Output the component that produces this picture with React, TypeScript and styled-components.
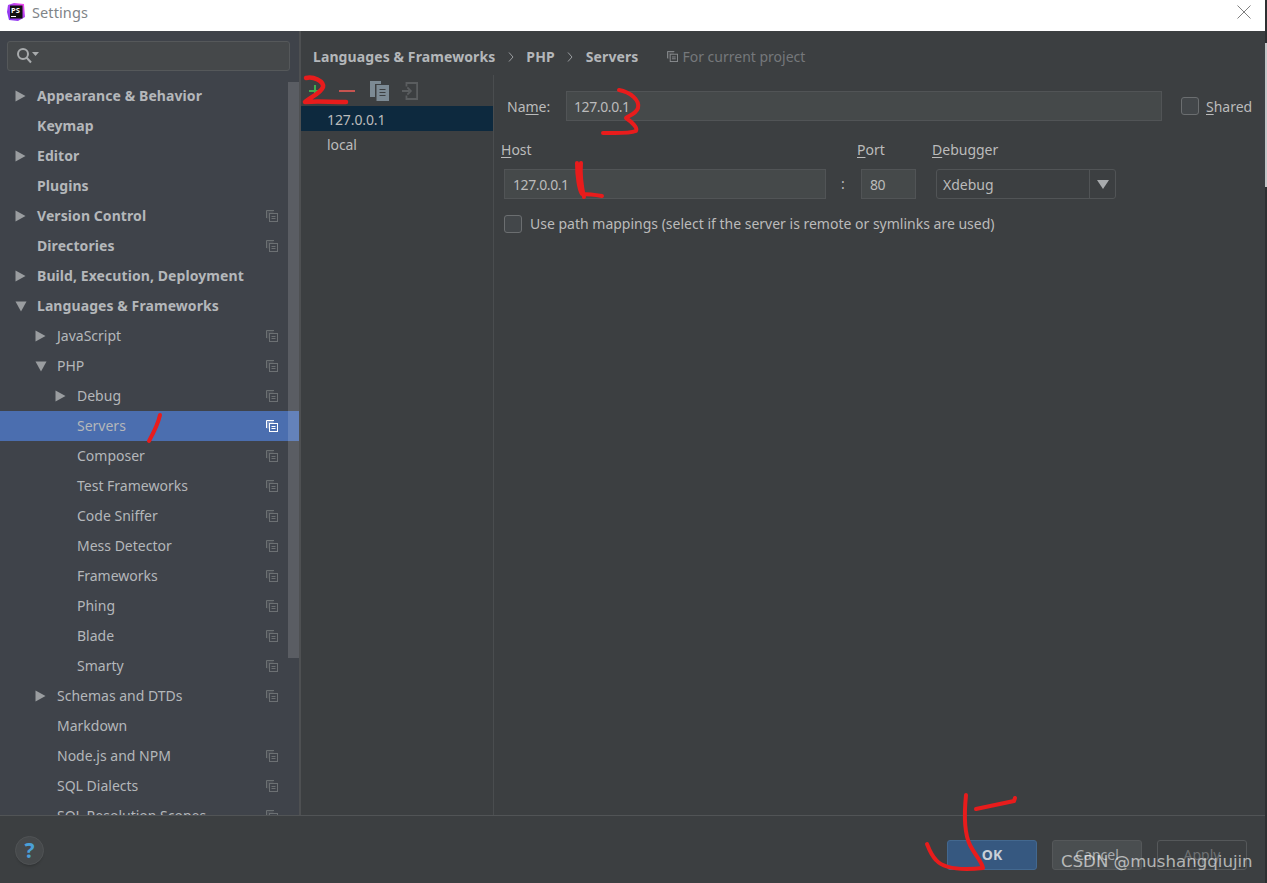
import React from "react";
import styled, { createGlobalStyle } from "styled-components";

const Global = createGlobalStyle`
  html, body { margin: 0; padding: 0; width: 100%; height: 100%; overflow: hidden; background: #3c3f41; }
  #root { height: 100%; }
  * { box-sizing: border-box; }
`;

const Frame = styled.div`
  position: relative;
  width: 1267px;
  height: 883px;
  display: flex;
  flex-direction: column;
  overflow: hidden;
  background: #3c3f41;
  color: #bbbbbb;
  font-family: "Noto Sans", "Open Sans", sans-serif;
  font-size: 14px;
`;

const TitleBar = styled.div`
  height: 31px;
  flex: none;
  background: #ffffff;
  display: flex;
  align-items: center;
  padding: 0 16px 7px 6px;
  gap: 6px;
  color: #7f8488;
  font-size: 14.5px;
`;
const TitleText = styled.span`
  flex: 1;
  letter-spacing: 0.1px;
`;

const Body = styled.div`
  flex: 1;
  min-height: 0;
  display: flex;
`;

const Sidebar = styled.div`
  position: relative;
  width: 299px;
  flex: none;
  background: #3f434a;
  padding: 10px 10px 0 7px;
  overflow: hidden;
`;
const Divider = styled.div`
  width: 2px;
  flex: none;
  background: #4e5052;
`;
const SearchBox = styled.div`
  height: 30px;
  width: 283px;
  border: 1px solid #55585a;
  border-radius: 3px;
  background: #45484a;
  display: flex;
  align-items: center;
  padding-left: 8px;
`;
const Tree = styled.div`
  margin: 10px -10px 0 -7px;
`;
const Row = styled.div<{ $active?: boolean; $indent: number }>`
  height: 30px;
  display: flex;
  align-items: center;
  padding-left: ${(p) => 15 + p.$indent * 20}px;
  padding-right: 21px;
  background: ${(p) => (p.$active ? "#4b6eaf" : "transparent")};
`;
const Arrow = styled.span`
  width: 22px;
  flex: none;
  display: flex;
`;
const RowLabel = styled.span<{ $bold?: boolean }>`
  flex: 1;
  white-space: nowrap;
  margin-bottom: 2px;
  font-weight: ${(p) => (p.$bold ? 700 : 400)};
  font-size: 14px;
  letter-spacing: ${(p) => (p.$bold ? "0.08px" : "0")};
  color: #b4b7ba;
`;
const ScrollThumb = styled.div`
  position: absolute;
  top: 51px;
  right: 0;
  width: 11px;
  height: 576px;
  background: rgba(255, 255, 255, 0.14);
`;

const Main = styled.div`
  flex: 1;
  min-width: 0;
  display: flex;
  flex-direction: column;
`;
const Crumbs = styled.div`
  height: 44px;
  flex: none;
  display: flex;
  align-items: flex-end;
  padding: 0 0 9px 12px;
  font-weight: 700;
  letter-spacing: 0.1px;
  white-space: nowrap;
  color: #b4b7ba;
`;
const CrumbSep = styled.span`
  width: 31px;
  display: flex;
  justify-content: center;
  align-self: center;
  margin-top: 17px;
`;
const ProjectNote = styled.span`
  display: flex;
  align-items: center;
  gap: 4px;
  margin-left: 29px;
  font-weight: 400;
  letter-spacing: 0;
  color: #75787b;
`;
const Split = styled.div`
  flex: 1;
  min-height: 0;
  display: flex;
`;
const ListPane = styled.div`
  width: 192px;
  flex: none;
`;
const Toolbar = styled.div`
  height: 31px;
  display: flex;
  align-items: center;
  padding-left: 8px;
`;
const ToolIcon = styled.svg<{ $gap: number }>`
  margin-left: ${(p) => p.$gap}px;
  flex: none;
`;
const ServerRow = styled.div<{ $selected?: boolean }>`
  height: ${(p) => (p.$selected ? 25 : 27)}px;
  padding: ${(p) => (p.$selected ? "1px 0 0 26px" : "0 0 0 26px")};
  display: flex;
  align-items: center;
  background: ${(p) => (p.$selected ? "#0d293e" : "transparent")};
  letter-spacing: -0.1px;
  color: #bbbbbb;
  font-size: 14px;
`;
const Form = styled.div`
  flex: 1;
  min-width: 0;
  border-left: 1px solid #4a4d4f;
  padding: 16px 0 0 8px;
`;
const NameRow = styled.div`
  display: flex;
  align-items: center;
  padding-left: 5px;
`;
const NameLabel = styled.span`
  width: 59px;
  flex: none;
`;
const Field = styled.div<{ $w: number; $pad?: number }>`
  width: ${(p) => p.$w}px;
  height: 30px;
  flex: none;
  background: #45494a;
  border: 1px solid #515456;
  display: flex;
  align-items: center;
  padding-left: ${(p) => p.$pad ?? 8}px;
  letter-spacing: -0.4px;
  color: #bbbbbb;
`;
const Box = styled.span`
  width: 18px;
  height: 18px;
  flex: none;
  border: 1px solid #6b6e70;
  border-radius: 3px;
  background: #43474a;
`;
const Shared = styled.div`
  display: flex;
  align-items: center;
  gap: 7px;
  margin-left: 19px;
`;
const HostGrid = styled.div`
  display: grid;
  grid-template-columns: 322px 35px 55px 20px 180px;
  grid-template-rows: 23px 30px;
  row-gap: 8px;
  margin: 17px 0 0 2px;
`;
const HeadLabel = styled.span<{ $shift?: number }>`
  margin-left: ${(p) => p.$shift ?? 0}px;
  line-height: 23px;
  white-space: nowrap;
`;
const Colon = styled.span`
  text-align: center;
  line-height: 30px;
  padding-right: 1px;
`;
const Combo = styled.div`
  height: 30px;
  display: flex;
  border: 1px solid #515456;
  border-radius: 3px;
  background: #3c3f41;
  align-items: stretch;
`;
const ComboText = styled.span`
  flex: 1;
  padding-left: 6px;
  line-height: 29px;
`;
const ComboBtn = styled.span`
  width: 26px;
  border-left: 1px solid #515456;
  display: flex;
  align-items: center;
  justify-content: center;
`;
const MappingRow = styled.div`
  display: flex;
  align-items: center;
  gap: 8px;
  margin: 15px 0 0 2px;
  white-space: nowrap;
`;

const Footer = styled.div`
  height: 68px;
  flex: none;
  border-top: 1px solid #515456;
  background: #3c3f41;
  display: flex;
  align-items: center;
  padding: 2px 20px 0 15px;
`;
const Help = styled.div`
  width: 29px;
  height: 29px;
  border-radius: 50%;
  background: #46494b;
  border: 1px solid #505355;
  box-shadow: 0 3px 3px -2px rgba(0, 0, 0, 0.25);
  color: #4aa0d8;
  font-weight: 700;
  font-size: 21px;
  line-height: 26px;
  text-align: center;
`;
const Buttons = styled.div`
  margin: 8px 0 0 auto;
  display: flex;
  gap: 15px;
`;
const Button = styled.div<{ $kind: "ok" | "cancel" | "apply" }>`
  width: 90px;
  height: 30px;
  border-radius: 3px;
  display: flex;
  align-items: center;
  justify-content: center;
  font-weight: ${(p) => (p.$kind === "ok" ? 700 : 400)};
  color: ${(p) => (p.$kind === "ok" ? "#c9d0d8" : p.$kind === "cancel" ? "#a8abad" : "#6e7173")};
  background: ${(p) => (p.$kind === "ok" ? "#365880" : p.$kind === "cancel" ? "#4a4e50" : "transparent")};
  border: 1px solid ${(p) => (p.$kind === "ok" ? "#43688f" : "#55585a")};
`;
const Watermark = styled.div`
  position: absolute;
  left: 1061px;
  top: 850px;
  font-family: "DejaVu Sans", sans-serif;
  font-size: 16.6px;
  line-height: 24px;
  color: rgba(255, 255, 255, 0.62);
  white-space: nowrap;
`;
const Scribbles = styled.svg`
  position: absolute;
  left: 0;
  top: 0;
  pointer-events: none;
`;
const RightStrip = styled.div`
  position: absolute;
  right: 0;
  top: 0;
  width: 2px;
  height: 883px;
  background: #2e3032;
`;
const StripLight = styled.div`
  margin-top: 43px;
  height: 144px;
  background: #c4c6c8;
`;
const U = styled.span`
  text-decoration: underline;
  text-underline-offset: 2px;
`;

const Tri = () => (
  <svg width="11" height="12" viewBox="0 0 11 12">
    <path d="M0.5 0.5 L10.5 6 L0.5 11.5 Z" fill="#9a9da0" />
  </svg>
);
const TriDown = () => (
  <svg width="12" height="11" viewBox="0 0 12 11">
    <path d="M0.5 0.5 H11.5 L6 10.5 Z" fill="#9a9da0" />
  </svg>
);
const ScopeIcon = ({ c = "#6c7073", size = 12 }: { c?: string; size?: number }) => (
  <svg width={size} height={size} viewBox="0 0 12 12" fill="none">
    <path d="M8 .5H.5V8" stroke={c} />
    <path d="M.5.5h7V3H3v5.5H.5z" fill={c} fillOpacity=".25" />
    <rect x="3.5" y="3.5" width="8" height="8" stroke={c} />
    <path d="M5.5 6.5h4M5.5 8.5h4" stroke={c} />
  </svg>
);
const Chevron = () => (
  <svg width="6" height="10" viewBox="0 0 6 10" fill="none">
    <path d="M1 .5 5 5 1 9.5" stroke="#9a9da0" />
  </svg>
);

const rows: { t: string; i: number; arrow?: "r" | "d"; b?: boolean; s?: boolean; a?: boolean }[] = [
  { t: "Appearance & Behavior", i: 0, arrow: "r", b: true },
  { t: "Keymap", i: 0, b: true },
  { t: "Editor", i: 0, arrow: "r", b: true },
  { t: "Plugins", i: 0, b: true },
  { t: "Version Control", i: 0, arrow: "r", b: true, s: true },
  { t: "Directories", i: 0, b: true, s: true },
  { t: "Build, Execution, Deployment", i: 0, arrow: "r", b: true },
  { t: "Languages & Frameworks", i: 0, arrow: "d", b: true },
  { t: "JavaScript", i: 1, arrow: "r", s: true },
  { t: "PHP", i: 1, arrow: "d", s: true },
  { t: "Debug", i: 2, arrow: "r", s: true },
  { t: "Servers", i: 2, s: true, a: true },
  { t: "Composer", i: 2, s: true },
  { t: "Test Frameworks", i: 2, s: true },
  { t: "Code Sniffer", i: 2, s: true },
  { t: "Mess Detector", i: 2, s: true },
  { t: "Frameworks", i: 2, s: true },
  { t: "Phing", i: 2, s: true },
  { t: "Blade", i: 2, s: true },
  { t: "Smarty", i: 2, s: true },
  { t: "Schemas and DTDs", i: 1, arrow: "r", s: true },
  { t: "Markdown", i: 1 },
  { t: "Node.js and NPM", i: 1, s: true },
  { t: "SQL Dialects", i: 1, s: true },
  { t: "SQL Resolution Scopes", i: 1, s: true },
];

export default function App() {
  return (
    <Frame>
      <Global />
      <TitleBar>
        <svg width="20" height="20" viewBox="0 0 20 20">
          <defs>
            <linearGradient id="ps" x1="0" y1="1" x2="1" y2="0">
              <stop offset="0" stopColor="#7b2ff0" />
              <stop offset="0.6" stopColor="#b345f1" />
              <stop offset="1" stopColor="#ff45ed" />
            </linearGradient>
          </defs>
          <path d="M2 3 L8 1 L18 2 L19 15 L12 19 L3 18 L1 10 Z" fill="url(#ps)" />
          <rect x="4" y="3.5" width="12.5" height="13" fill="#111" />
          <text x="5" y="11" fontSize="7.5" fontWeight="700" fill="#fff" fontFamily="Noto Sans, sans-serif">
            PS
          </text>
          <rect x="5" y="14" width="5" height="1" fill="#fff" />
        </svg>
        <TitleText>Settings</TitleText>
        <svg width="14" height="14" viewBox="0 0 14 14" fill="none">
          <path d="M.5.5l13 13M13.5.5l-13 13" stroke="#7f7f7f" />
        </svg>
      </TitleBar>
      <Body>
        <Sidebar>
          <SearchBox>
            <svg width="24" height="18" viewBox="0 0 24 18" fill="none">
              <circle cx="7" cy="7" r="5" stroke="#a8abad" strokeWidth="2" />
              <path d="M10.5 10.5 15 15.5" stroke="#a8abad" strokeWidth="2" />
              <path d="M16 5h7l-3.5 4z" fill="#a8abad" />
            </svg>
          </SearchBox>
          <Tree>
            {rows.map((r) => (
              <Row key={r.t} $indent={r.i} $active={r.a}>
                <Arrow>{r.arrow === "r" ? <Tri /> : r.arrow === "d" ? <TriDown /> : null}</Arrow>
                <RowLabel $bold={r.b}>{r.t}</RowLabel>
                {r.s ? <ScopeIcon c={r.a ? "#ffffff" : "#6c7073"} /> : null}
              </Row>
            ))}
          </Tree>
          <ScrollThumb />
        </Sidebar>
        <Divider />
        <Main>
          <Crumbs>
            <span>Languages &amp; Frameworks</span>
            <CrumbSep>
              <Chevron />
            </CrumbSep>
            <span>PHP</span>
            <CrumbSep>
              <Chevron />
            </CrumbSep>
            <span>Servers</span>
            <ProjectNote>
              <ScopeIcon c="#8a8d90" size={11} />
              For current project
            </ProjectNote>
          </Crumbs>
          <Split>
            <ListPane>
              <Toolbar>
                <ToolIcon $gap={0} width="12" height="12" viewBox="0 0 12 12">
                  <path d="M5 0h2v5h5v2H7v5H5V7H0V5h5z" fill="#3fae4f" />
                </ToolIcon>
                <ToolIcon $gap={18} width="16" height="12" viewBox="0 0 16 12">
                  <rect x="0" y="5" width="16" height="2" fill="#c75450" />
                </ToolIcon>
                <ToolIcon $gap={15} width="19" height="20" viewBox="0 0 19 20">
                  <path d="M0 0h11v3H5v13H0z" fill="#7c8a94" />
                  <path d="M6.5 4H19v16H6.5z" fill="#7c8a94" />
                  <path d="M9.5 8.5h6M9.5 11.5h6M9.5 14.5h6" stroke="#3c3f41" />
                </ToolIcon>
                <ToolIcon $gap={13} width="16" height="18" viewBox="0 0 18 20" fill="none">
                  <path d="M5 5V1h12v18H5v-4" stroke="#5a5d5f" strokeWidth="2" />
                  <path d="M0 10h8M6 6l4 4-4 4" stroke="#5a5d5f" strokeWidth="2" />
                </ToolIcon>
              </Toolbar>
              <ServerRow $selected>127.0.0.1</ServerRow>
              <ServerRow>local</ServerRow>
            </ListPane>
            <Form>
              <NameRow>
                <NameLabel>
                  Na<U>m</U>e:
                </NameLabel>
                <Field $w={596} $pad={7}>
                  127.0.0.1
                </Field>
                <Shared>
                  <Box />
                  <span>
                    <U>S</U>hared
                  </span>
                </Shared>
              </NameRow>
              <HostGrid>
                <HeadLabel $shift={-3}>
                  <U>H</U>ost
                </HeadLabel>
                <span />
                <HeadLabel $shift={-4}>
                  <U>P</U>ort
                </HeadLabel>
                <span />
                <HeadLabel $shift={-4}>
                  <U>D</U>ebugger
                </HeadLabel>
                <Field $w={322}>127.0.0.1</Field>
                <Colon>:</Colon>
                <Field $w={55}>80</Field>
                <span />
                <Combo>
                  <ComboText>Xdebug</ComboText>
                  <ComboBtn>
                    <svg width="12" height="9" viewBox="0 0 12 9">
                      <path d="M0 0h12L6 9z" fill="#a8abad" />
                    </svg>
                  </ComboBtn>
                </Combo>
              </HostGrid>
              <MappingRow>
                <Box />
                <span>Use path mappings (select if the server is remote or symlinks are used)</span>
              </MappingRow>
            </Form>
          </Split>
        </Main>
      </Body>
      <Footer>
        <Help>?</Help>
        <Buttons>
          <Button $kind="ok">OK</Button>
          <Button $kind="cancel">Cancel</Button>
          <Button $kind="apply">Apply</Button>
        </Buttons>
      </Footer>
      <RightStrip>
        <StripLight />
      </RightStrip>
      <Scribbles width="1267" height="883" viewBox="0 0 1267 883" fill="none" stroke="#e81c1c" strokeLinecap="round" strokeLinejoin="round">
        <path d="M160 415 C158 424 154 432 149 441" strokeWidth="4" />
        <path d="M306 78 C313 76 324 81 323 87 C321 93 311 97 305 102 C317 101 328 102 346 102" strokeWidth="4.5" />
        <path d="M619 90 C630 92 640 100 638 108 C636 114 628 116 626 118 C632 122 638 128 636 131 C628 134 615 133 603 133" strokeWidth="4" />
        <path d="M581 163 C580 175 582 188 584 197 M577 163 C577 175 579 190 582 194 C588 194 596 195 602 196" strokeWidth="4" />
        <path d="M966 795 C964 815 965 835 970 845 C975 855 982 862 983 868 C965 870 945 870 936 860 C931 855 929 849 927 844" strokeWidth="4" />
        <path d="M976 809 C990 806 1005 803 1014 801 L1015 798" strokeWidth="4" />
      </Scribbles>
      <Watermark>CSDN @mushangqiujin</Watermark>
    </Frame>
  );
}
